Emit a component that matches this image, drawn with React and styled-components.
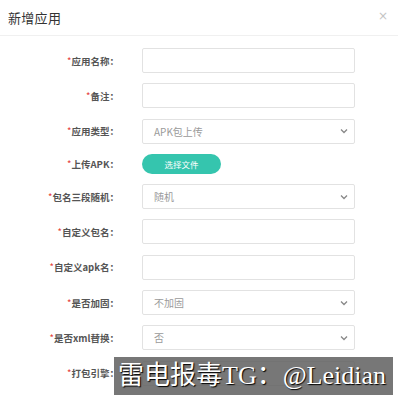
import React from "react";
import styled, { createGlobalStyle } from "styled-components";

const GlobalStyle = createGlobalStyle`
    html, body {
        margin: 0;
        padding: 0;
        background: #fff;
        font-family: "Noto Sans CJK SC", "Noto Sans", sans-serif;
    }
`;

const fields = [
    { label: "应用名称", type: "input" },
    { label: "备注", type: "input" },
    { label: "应用类型", type: "select", value: "APK包上传" },
    { label: "上传APK", type: "button", value: "选择文件" },
    { label: "包名三段随机", type: "select", value: "随机" },
    { label: "自定义包名", type: "input" },
    { label: "自定义apk名", type: "input" },
    { label: "是否加固", type: "select", value: "不加固" },
    { label: "是否xml替换", type: "select", value: "否" },
    { label: "打包引擎", type: "select", value: "" },
];

function Chevron() {
    return (
        <svg width="8" height="6" viewBox="0 0 8 6">
            <path d="M1 1.5 L4 4.5 L7 1.5" fill="none" stroke="#888" strokeWidth="1.3" />
        </svg>
    );
}

function App() {
    return (
        <Modal>
            <GlobalStyle />
            <Header>
                <Title>新增应用</Title>
                <Close>×</Close>
            </Header>
            <Form>
                {fields.map((f) => (
                    <Row key={f.label} short={f.type === "button"}>
                        <Label>
                            <Star>*</Star>{f.label}：
                        </Label>
                        {f.type === "input" && <Input />}
                        {f.type === "select" && (
                            <Select>
                                <span>{f.value}</span>
                                <Chevron />
                            </Select>
                        )}
                        {f.type === "button" && <UploadButton>{f.value}</UploadButton>}
                    </Row>
                ))}
            </Form>
            <Watermark>雷电报毒TG：@Leidian</Watermark>
        </Modal>
    );
}

const Modal = styled.div`
    position: relative;
    width: 398px;
    height: 400px;
    overflow: hidden;
    background: #fff;
`;

const Header = styled.div`
    height: 36px;
    display: flex;
    align-items: center;
    justify-content: space-between;
    padding: 0 10px 0 8px;
    border-bottom: 1px solid #f0f0f0;
    box-sizing: border-box;
`;

const Title = styled.div`
    font-size: 13px;
    color: #333;
    letter-spacing: 0.3px;
`;

const Close = styled.div`
    font-family: "DejaVu Sans", sans-serif;
    font-size: 12px;
    color: #c4c4c4;
    margin-top: -4px;
`;

const Form = styled.div`
    display: flex;
    flex-direction: column;
    gap: 10.3px;
    padding-top: 12px;
`;

const Row = styled.div`
    display: grid;
    grid-template-columns: 119px 213px;
    column-gap: 23px;
    align-items: center;
    height: ${(p) => (p.short ? "20px" : "25px")};
`;

const Label = styled.div`
    text-align: right;
    font-size: 9.5px;
    font-weight: 700;
    color: #555;
    white-space: nowrap;
`;

const Star = styled.span`
    color: #e53935;
    font-weight: 400;
`;

const Input = styled.div`
    height: 25px;
    box-sizing: border-box;
    border: 1px solid #e2e2e2;
    border-radius: 2px;
    background: #fff;
`;

const Select = styled(Input)`
    display: flex;
    align-items: center;
    justify-content: space-between;
    padding: 0 6px 0 11px;
    font-size: 10px;
    color: #9a9a9a;
`;

const UploadButton = styled.div`
    width: 79px;
    height: 20px;
    border-radius: 10px;
    background: #35c5ae;
    color: #fff;
    font-size: 8.5px;
    display: flex;
    align-items: center;
    justify-content: center;
`;

const Watermark = styled.div`
    position: absolute;
    left: 114px;
    top: 357px;
    width: 279px;
    height: 38px;
    background: rgba(95, 95, 95, 0.85);
    color: #fff;
    font-family: "Liberation Serif", "Noto Sans CJK SC", serif;
    font-size: 26px;
    line-height: 38px;
    padding-left: 4px;
    box-sizing: border-box;
    white-space: nowrap;
    overflow: hidden;
    text-shadow: 1px 1px 1px #000;
`;

export default App;
